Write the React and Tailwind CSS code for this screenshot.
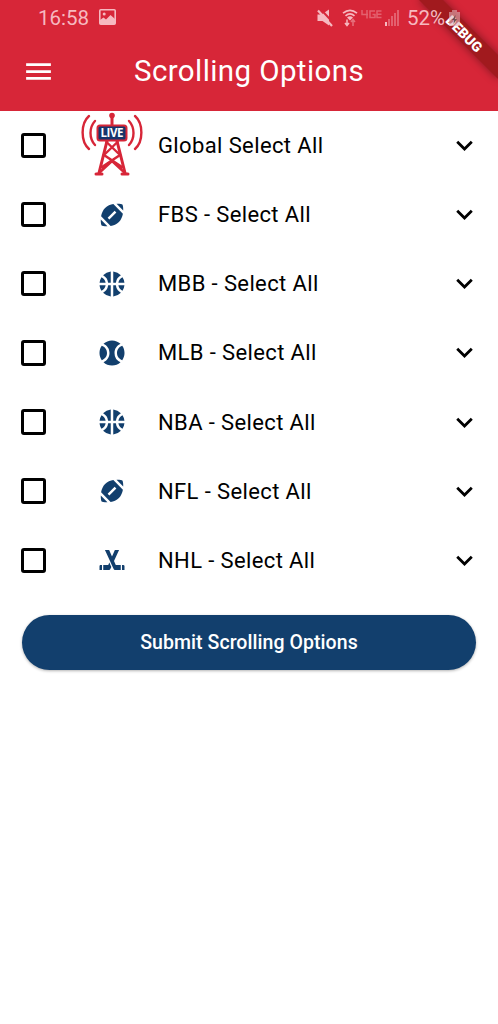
import React from 'react';
import {
  MdExpandMore,
  MdMenu,
  MdSportsBaseball,
  MdSportsBasketball,
  MdSportsFootball,
  MdSportsHockey,
} from 'react-icons/md';

const leagues = [
  { name: 'FBS', Icon: MdSportsFootball },
  { name: 'MBB', Icon: MdSportsBasketball },
  { name: 'MLB', Icon: MdSportsBaseball },
  { name: 'NBA', Icon: MdSportsBasketball },
  { name: 'NFL', Icon: MdSportsFootball },
  { name: 'NHL', Icon: MdSportsHockey },
];

function LiveTower() {
  return (
    <svg className="w-16 h-[66px]" viewBox="0 0 64 66" fill="none" stroke="#d72638" strokeWidth="2.4" strokeLinecap="round">
      {/* Signal waves */}
      <path d="M9 4C0.5 11.5 0.5 29.5 9 37" />
      <path d="M15 9C9 15.5 9 26.5 15 33" />
      <path d="M55 4C63.5 11.5 63.5 29.5 55 37" />
      <path d="M49 9C55 15.5 55 26.5 49 33" />
      {/* Mast */}
      <path d="M32 5V15" strokeWidth="3" />
      <circle cx="32" cy="3.6" r="2.8" fill="#d72638" stroke="none" />
      <path d="M27 29L19 61M37 29L45 61M16 62H22M42 62H48" strokeWidth="3" />
      <path d="M26.5 30L40 43L22 55M37.5 30L24 43L42 55M32 49L45 61M32 49L19 61" strokeWidth="2.4" />
      <rect x="17.5" y="13.5" width="29" height="15" rx="2.5" fill="#17356b" strokeWidth="2" />
      <text x="32" y="25" textAnchor="middle" fill="#fff" stroke="none" fontSize="11.5" fontWeight="700" fontFamily="Open Sans, sans-serif" textLength="23">LIVE</text>
    </svg>
  );
}

function StatusBar() {
  return (
    <div className="relative z-10 h-9 pl-[38px] flex items-center text-[#f6b9c0] text-[20.5px]">
      <span className="w-[61px]">16:58</span>
      <svg className="w-[17px] h-4 mb-0.5" viewBox="0 0 17 16">
        <rect x="0.8" y="0.8" width="15.4" height="14.4" rx="1" fill="none" stroke="currentColor" strokeWidth="1.6" />
        <circle cx="5.2" cy="5" r="1.5" fill="currentColor" />
        <path d="M1 11L4.5 8.5L7 10.5L11.5 6L16 10V15H1z" fill="currentColor" />
      </svg>
      <div className="ml-auto mr-[37px] flex items-center">
        <svg className="w-4 h-[18px]" viewBox="0 0 16 18">
          <path d="M0.5 5.5H4.5L12 0.5V16.5L5.5 12H0.5z" fill="currentColor" />
          <path d="M3.500 0L16.500 14" stroke="#d72638" strokeWidth="2" />
          <path d="M1 1.500L15 17" stroke="currentColor" strokeWidth="2.2" />
        </svg>
        <svg className="ml-[9px] w-4 h-[18px]" viewBox="0 0 16 18" fill="none" stroke="currentColor" strokeWidth="1.7">
          <path d="M1 4.2Q8-1.5 15 4.2M3.5 6.8Q8 3 12.5 6.8" />
          <path d="M5 8.500Q8 6 11 8.500L8 11.500z" fill="currentColor" stroke="none" />
          <path d="M5 10.5V16M3 14L5 16.5L7 14" strokeWidth="1.5" />
          <path d="M11 17V11M9 13L11 10.5L13 13" strokeWidth="1.5" opacity=".5" />
        </svg>
        <svg className="ml-[3px] mb-2 w-[21px] h-[9px] opacity-40" viewBox="0 0 21 9" fill="none" stroke="currentColor" strokeWidth="1.5">
          <path d="M1 0V4.5H7M6 0V8.5M14 1H9V7.5H14V4.5H11.5M20.5 1H16V7.5H20.5M16 4.2H20.5" />
        </svg>
        <svg className="ml-0.5 w-4 h-4" viewBox="0 0 16 16" fill="currentColor">
          <path d="M1 12h2v4H1z" />
          <path d="M4 9h2v7H4zM7 6h2v10H7zM10 3h2v13h-2zM13 0h2v16h-2z" opacity=".4" />
        </svg>
        <span className="ml-[7px] w-[39px]">52%</span>
        <svg className="ml-0.5 w-[13px] h-[18px]" viewBox="0 0 13 18">
          <path d="M4 1h5v2h3v14H1V3h3z" fill="#e0b0b5" opacity=".6" />
          <path d="M7.5 6L4 11H6L5.5 15L9 10H7z" fill="#54333b" opacity=".8" />
        </svg>
      </div>
    </div>
  );
}

function DebugBanner() {
  return (
    <div className="absolute top-0 right-0 w-[110px] h-[110px] overflow-hidden">
      <div className="absolute left-[21px] top-[25px] w-[111px] h-[17px] rotate-45 bg-[#a11a1e] shadow-[0_0_9px_rgba(0,0,0,0.4)] flex items-center justify-center text-white text-[14px] leading-none font-black">
        DEBUG
      </div>
    </div>
  );
}

function OptionRow({ label, children }) {
  return (
    <label className="h-[69.17px] flex items-center">
      <span className="ml-[20.5px] w-[25.5px] h-[25.5px] rounded-[3px] border-[3px] border-black"></span>
      <span className="ml-[34px] w-16 flex justify-center text-[#123f6d]">{children}</span>
      <span className="pl-3.5 text-[22px] tracking-[0.38px]">{label}</span>
      <MdExpandMore className="ml-auto mr-[17px] w-[33px] h-[33px]" />
    </label>
  );
}

export default function App() {
  return (
    <div className="w-[498px] h-[1024px] bg-white text-black font-['Roboto',sans-serif] overflow-hidden">
      <header className="relative h-[110.8px] bg-[#d72638]">
        <StatusBar />
        <div className="h-[71px] flex items-center text-white">
          <MdMenu className="ml-[22px] w-[33px] h-[33px]" />
          <h1 className="ml-[79px] text-[29.5px] tracking-[0.4px]">Scrolling Options</h1>
        </div>
        <DebugBanner />
      </header>

      <main>
        <OptionRow label="Global Select All">
          <LiveTower />
        </OptionRow>
        {leagues.map(({ name, Icon }) => (
          <OptionRow key={name} label={`${name} - Select All`}>
            <Icon className="w-[30px] h-[30px]" />
          </OptionRow>
        ))}
        <button className="mt-5 mx-[22px] w-[454px] h-[55px] rounded-full bg-[#123f6d] text-white text-[19.5px] tracking-[0.06px] font-medium shadow-[0_1px_3px_rgba(0,0,0,0.3)]">
          Submit Scrolling Options
        </button>
      </main>
    </div>
  );
}
